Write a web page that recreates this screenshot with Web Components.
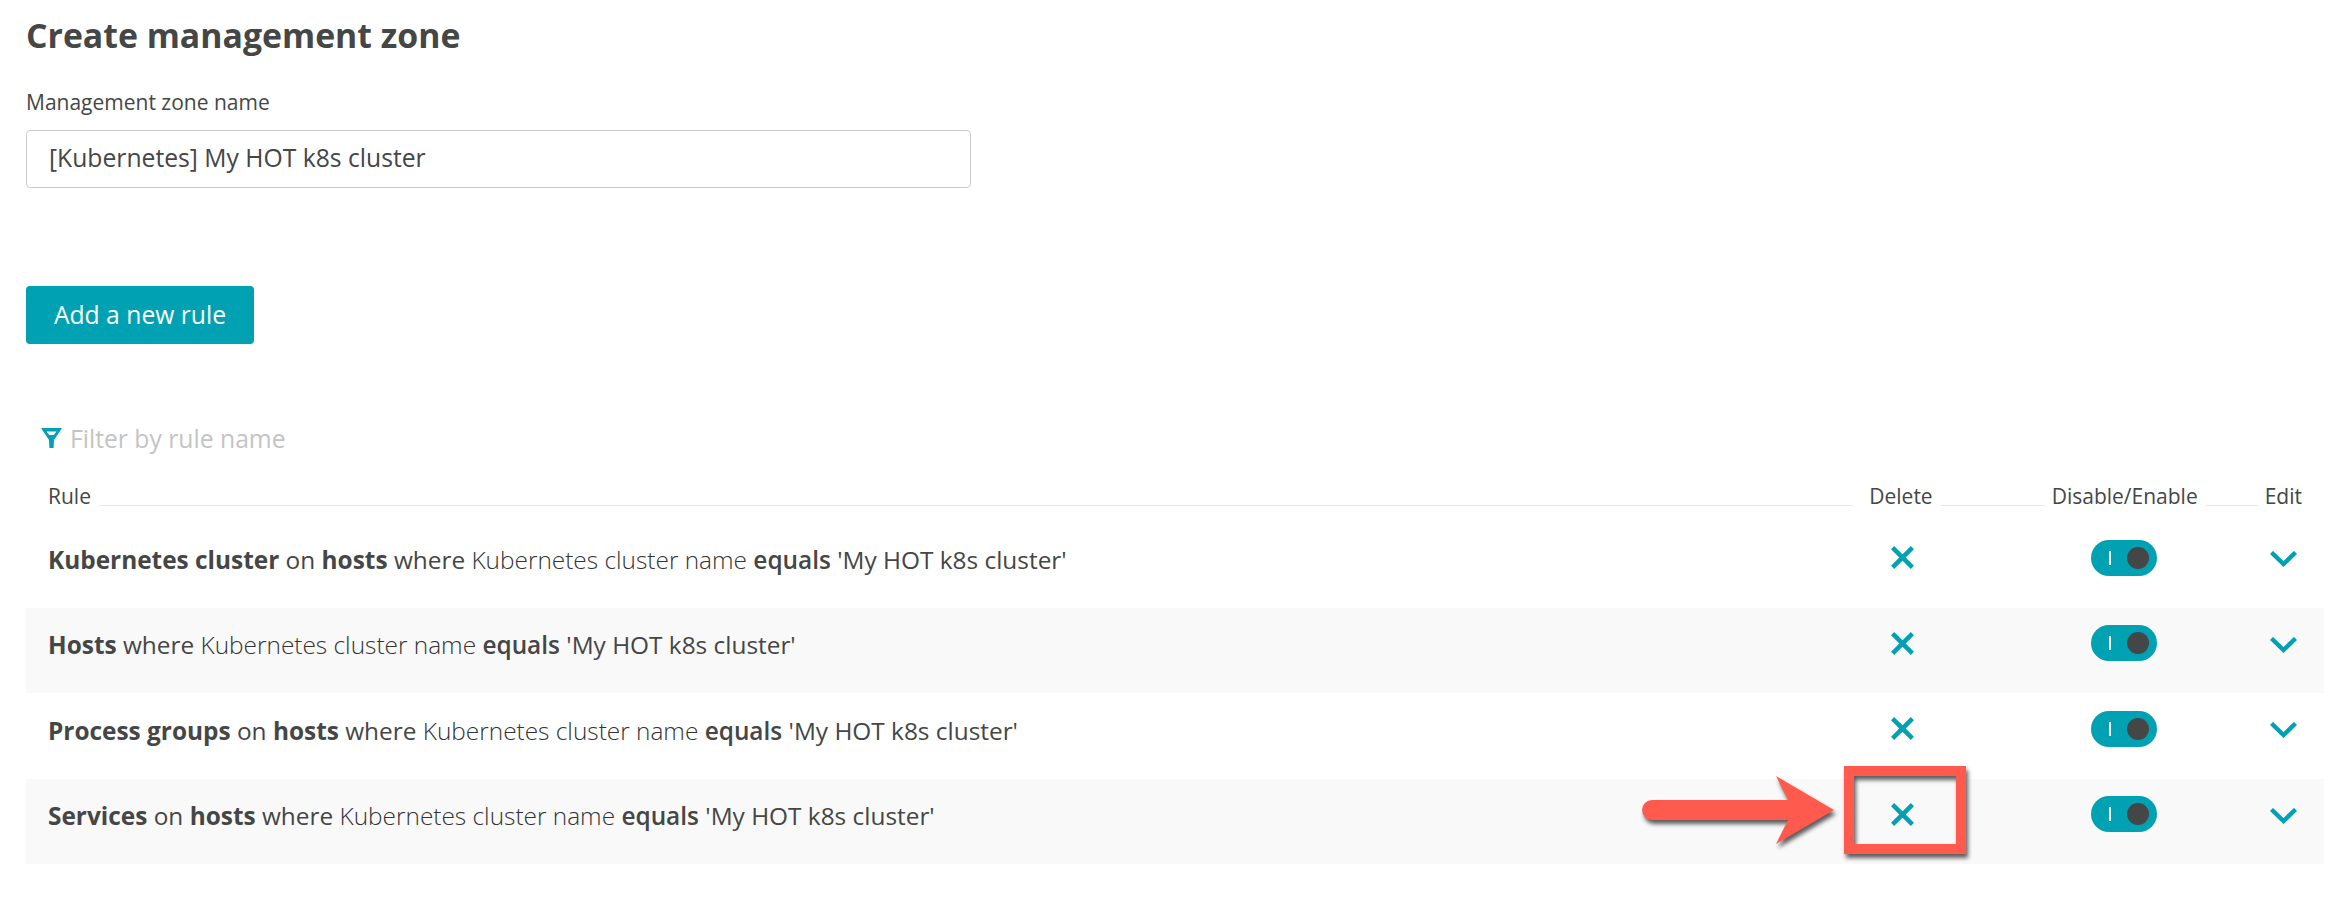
<!DOCTYPE html>
<html>
<head>
<meta charset="utf-8">
<title>Create management zone</title>
<style>
  html, body { margin: 0; background: #fff; }
  body { font-family: "Open Sans", Lato, sans-serif; color: #454646; }
</style>
</head>
<body>
<zone-page>
  <h-title slot="title">Create management zone</h-title>
  <zone-field slot="field" label="Management zone name" value="[Kubernetes] My HOT k8s cluster"></zone-field>
  <zone-button slot="action">Add a new rule</zone-button>
  <rule-filter slot="filter" placeholder="Filter by rule name"></rule-filter>
  <rule-table slot="table">
    <rule-row><b>Kubernetes cluster</b> on <b>hosts</b> where <i>Kubernetes cluster name</i> <em>equals</em> <u>'My HOT k8s cluster'</u></rule-row>
    <rule-row striped><b>Hosts</b> where <i>Kubernetes cluster name</i> <em>equals</em> <u>'My HOT k8s cluster'</u></rule-row>
    <rule-row><b>Process groups</b> on <b>hosts</b> where <i>Kubernetes cluster name</i> <em>equals</em> <u>'My HOT k8s cluster'</u></rule-row>
    <rule-row striped><b>Services</b> on <b>hosts</b> where <i>Kubernetes cluster name</i> <em>equals</em> <u>'My HOT k8s cluster'</u></rule-row>
  </rule-table>
  <delete-callout slot="overlay"></delete-callout>
</zone-page>

<script>
const TEAL = "#00a1b2";

class ZonePage extends HTMLElement {
  constructor() {
    super();
    this.attachShadow({ mode: "open" });
    this.shadowRoot.innerHTML = `
      <style>
        :host { display: block; position: relative; height: 922px; box-sizing: border-box; padding: 14px 16px 0 26px; overflow: hidden; }
        .title { height: 74px; }
        .field { height: 198px; }
        .action { height: 130px; }
        .filter { height: 58px; padding-top: 2px; margin-left: 15px; }
      </style>
      <div class="title"><slot name="title"></slot></div>
      <div class="field"><slot name="field"></slot></div>
      <div class="action"><slot name="action"></slot></div>
      <div class="filter"><slot name="filter"></slot></div>
      <slot name="table"></slot>
      <slot name="overlay"></slot>
    `;
  }
}

class HTitle extends HTMLElement {
  constructor() {
    super();
    this.attachShadow({ mode: "open" });
    this.shadowRoot.innerHTML = `
      <style>
        :host { display: block; font-size: 33.8px; line-height: 43px; font-weight: 700; color: #454646; }
      </style>
      <slot></slot>
    `;
  }
}

class ZoneField extends HTMLElement {
  constructor() {
    super();
    this.attachShadow({ mode: "open" });
    this.shadowRoot.innerHTML = `
      <style>
        :host { display: block; }
        .label { font-size: 21px; line-height: 28px; height: 42px; color: #454646; }
        .box { box-sizing: border-box; width: 945px; height: 58px; border: 1px solid #cccccc; border-radius: 4px; padding: 0 22px; font-size: 24.7px; line-height: 54px; color: #454646; }
      </style>
      <div class="label">${this.getAttribute("label")}</div>
      <div class="box">${this.getAttribute("value")}</div>
    `;
  }
}

class ZoneButton extends HTMLElement {
  constructor() {
    super();
    this.attachShadow({ mode: "open" });
    this.shadowRoot.innerHTML = `
      <style>
        :host { display: block; box-sizing: border-box; width: 228px; height: 58px; border-radius: 4px; background: ${TEAL}; color: #fff; font-size: 24.7px; line-height: 58px; text-align: center; }
      </style>
      <slot></slot>
    `;
  }
}

class RuleFilter extends HTMLElement {
  constructor() {
    super();
    this.attachShadow({ mode: "open" });
    this.shadowRoot.innerHTML = `
      <style>
        :host { display: flex; align-items: center; gap: 8px; height: 40px; font-size: 24.7px; color: #c4c4c4; }
        svg { display: block; width: 21px; height: 20px; }
      </style>
      <svg viewBox="0 0 21 20"><path d="M0 0H21L13 12L12.6 20H8.4L8 12Z" fill="${TEAL}"/><path d="M5.5 3.5H15.5L12.8 7H8.2Z" fill="#fff"/></svg>
      <span>${this.getAttribute("placeholder")}</span>
    `;
  }
}

class RuleTable extends HTMLElement {
  constructor() {
    super();
    this.attachShadow({ mode: "open" });
    this.shadowRoot.innerHTML = `
      <style>
        :host { display: block; font-size: 21px; }
        .head { display: flex; align-items: flex-start; box-sizing: border-box; height: 46px; padding: 6px 22px 0 22px; color: #454646; line-height: 28px; }
        .line { height: 1px; background: #e6e6e6; margin: 23px 7px 0 8px; }
        .grow { flex: 1; margin-right: 16px; }
      </style>
      <div class="head">
        <span>Rule</span><span class="line grow"></span>
        <span>Delete</span><span class="line" style="width:104px"></span>
        <span>Disable/Enable</span><span class="line" style="width:52px"></span>
        <span>Edit</span>
      </div>
      <slot></slot>
    `;
  }
}

class RuleRow extends HTMLElement {
  constructor() {
    super();
    this.attachShadow({ mode: "open" });
    this.shadowRoot.innerHTML = `
      <style>
        :host { display: grid; grid-template-columns: 1fr 168px 276px 42px; align-items: center; box-sizing: border-box; height: 85.5px; padding: 0 20px 14px 22px; font-size: 24.4px; font-weight: 400; color: #454646; }
        :host([striped]) { background: #f9f9f9; }
        .text { padding-top: 3px; }
        .cell { display: flex; justify-content: center; align-items: center; }
        .chev { padding-top: 3px; }
        ::slotted(b) { font-weight: 700; }
        ::slotted(i) { font-style: normal; font-weight: 300; color: #333; }
        ::slotted(em) { font-style: normal; font-weight: 600; }
        ::slotted(u) { text-decoration: none; font-weight: 400; }
        svg { display: block; fill: none; stroke: ${TEAL}; }
      </style>
      <div class="text"><slot></slot></div>
      <div class="cell"><svg width="23" height="23" viewBox="0 0 23 23" stroke-width="4.4"><path d="M1.6 1.6L21.4 21.4M21.4 1.6L1.6 21.4"/></svg></div>
      <div class="cell"><rule-toggle></rule-toggle></div>
      <div class="cell chev"><svg width="27" height="16" viewBox="0 0 27 16" stroke-width="4.4"><path d="M1.5 1.5L13.5 13L25.5 1.5"/></svg></div>
    `;
  }
}

class RuleToggle extends HTMLElement {
  constructor() {
    super();
    this.attachShadow({ mode: "open" });
    this.shadowRoot.innerHTML = `
      <style>
        :host { display: flex; align-items: center; box-sizing: border-box; width: 66px; height: 36px; border-radius: 18px; background: ${TEAL}; padding: 0 8px 0 18px; justify-content: space-between; }
        .bar { width: 2px; height: 14px; background: #fff; }
        .knob { width: 22px; height: 22px; border-radius: 50%; background: #454646; }
      </style>
      <span class="bar"></span><span class="knob"></span>
    `;
  }
}

class DeleteCallout extends HTMLElement {
  constructor() {
    super();
    this.attachShadow({ mode: "open" });
    this.shadowRoot.innerHTML = `
      <style>
        :host { display: block; }
        svg, .box { position: absolute; filter: drop-shadow(2px 4px 2px rgba(40,40,40,.75)); }
        svg { left: 1642px; top: 776px; width: 192px; height: 68px; overflow: visible; }
        .box { left: 1844px; top: 766px; width: 122px; height: 88px; box-sizing: border-box; border: 10px solid #ff5a4d; }
      </style>
      <svg viewBox="0 0 192 68"><path d="M10 24H146L134 0L192 34L134 68L146 44H10A10 10 0 0 1 10 24Z" fill="#ff5a4d"/></svg>
      <div class="box"></div>
    `;
  }
}

customElements.define("zone-page", ZonePage);
customElements.define("h-title", HTitle);
customElements.define("zone-field", ZoneField);
customElements.define("zone-button", ZoneButton);
customElements.define("rule-filter", RuleFilter);
customElements.define("rule-table", RuleTable);
customElements.define("rule-row", RuleRow);
customElements.define("rule-toggle", RuleToggle);
customElements.define("delete-callout", DeleteCallout);
</script>
</body>
</html>
